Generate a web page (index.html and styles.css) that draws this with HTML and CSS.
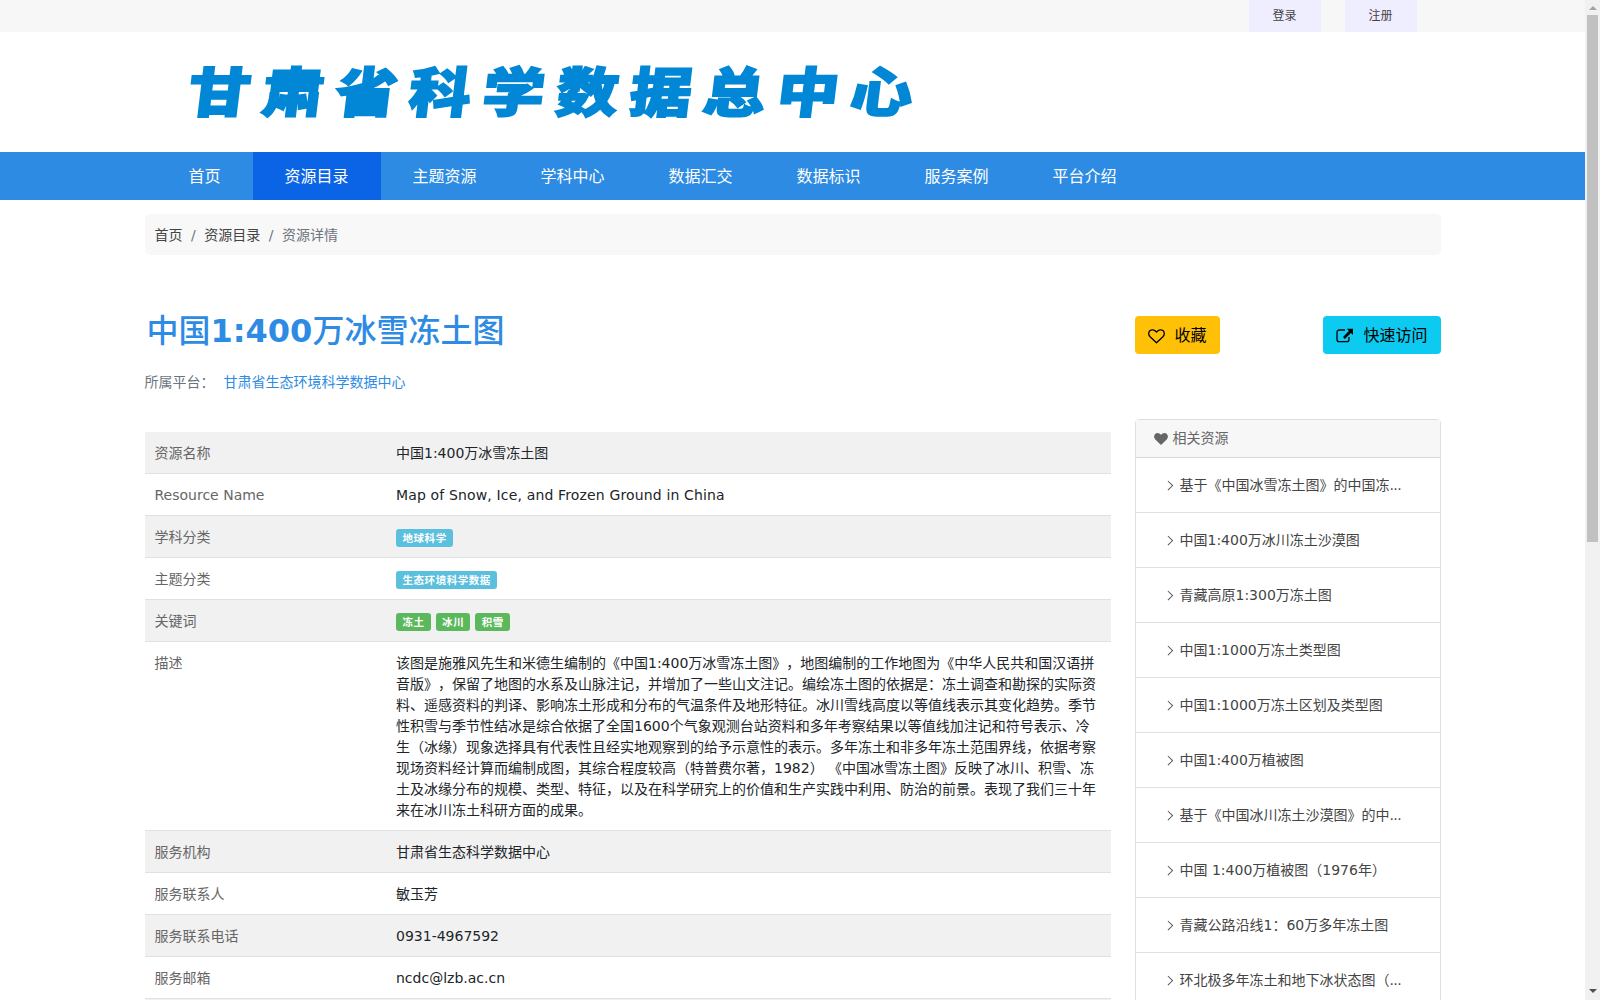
FILE: index.html
```html
<!DOCTYPE html>
<html lang="zh-CN">
<head>
    <meta charset="UTF-8">
    <meta name="viewport" content="width=device-width, initial-scale=1.0">
    <title>中国1:400万冰雪冻土图</title>
    <link rel="stylesheet" href="styles.css">
</head>
<body>
    <div class="page">
        <div class="topbar">
            <div class="container topbar-links">
                <a href="#">登录</a>
                <a href="#">注册</a>
            </div>
        </div>

        <header class="container header">
            <div class="logo">甘肃省科学数据总中心</div>
        </header>

        <nav class="navbar">
            <div class="container nav-list">
                <a href="#">首页</a>
                <a href="#" class="active">资源目录</a>
                <a href="#">主题资源</a>
                <a href="#">学科中心</a>
                <a href="#">数据汇交</a>
                <a href="#">数据标识</a>
                <a href="#">服务案例</a>
                <a href="#">平台介绍</a>
            </div>
        </nav>

        <div class="container">
            <div class="breadcrumb">
                <a href="#">首页</a><span class="sep">/</span><a href="#">资源目录</a><span class="sep">/</span><span>资源详情</span>
            </div>
        </div>

        <div class="container main">
            <div class="content">
                <h1 class="title">中国<b>1:400</b>万冰雪冻土图</h1>
                <p class="platform">所属平台：<a href="#">甘肃省生态环境科学数据中心</a></p>

                <table class="detail">
                    <tr><th>资源名称</th><td>中国1:400万冰雪冻土图</td></tr>
                    <tr><th>Resource Name</th><td class="en">Map of Snow, Ice, and Frozen Ground in China</td></tr>
                    <tr><th>学科分类</th><td><div class="labels"><span class="label info">地球科学</span></div></td></tr>
                    <tr><th>主题分类</th><td><div class="labels"><span class="label info">生态环境科学数据</span></div></td></tr>
                    <tr><th>关键词</th><td><div class="labels"><span class="label success">冻土</span><span class="label success">冰川</span><span class="label success">积雪</span></div></td></tr>
                    <tr><th>描述</th><td>该图是施雅风先生和米德生编制的《中国1:400万冰雪冻土图》，地图编制的工作地图为《中华人民共和国汉语拼<br>音版》，保留了地图的水系及山脉注记，并增加了一些山文注记。编绘冻土图的依据是：冻土调查和勘探的实际资<br>料、遥感资料的判译、影响冻土形成和分布的气温条件及地形特征。冰川雪线高度以等值线表示其变化趋势。季节<br>性积雪与季节性结冰是综合依据了全国1600个气象观测台站资料和多年考察结果以等值线加注记和符号表示、冷<br>生（冰缘）现象选择具有代表性且经实地观察到的给予示意性的表示。多年冻土和非多年冻土范围界线，依据考察<br>现场资料经计算而编制成图，其综合程度较高（特普费尔著，1982） 《中国冰雪冻土图》反映了冰川、积雪、冻<br>土及冰缘分布的规模、类型、特征，以及在科学研究上的价值和生产实践中利用、防治的前景。表现了我们三十年<br>来在冰川冻土科研方面的成果。</td></tr>
                    <tr><th>服务机构</th><td>甘肃省生态科学数据中心</td></tr>
                    <tr><th>服务联系人</th><td>敏玉芳</td></tr>
                    <tr><th>服务联系电话</th><td>0931-4967592</td></tr>
                    <tr><th>服务邮箱</th><td>ncdc@lzb.ac.cn</td></tr>
                    <tr><th></th><td></td></tr>
                </table>
            </div>

            <div class="sidebar">
                <div class="actions">
                    <button class="btn btn-warning">
                        <svg width="17" height="16" viewBox="0 0 17 16"><path d="M8.5 14.8 2.1 8.8C.3 6.900.3 4.200 1.800 2.800 3.600 1.200 6.400 1.400 8.500 4.100 10.600 1.400 13.400 1.200 15.200 2.800 16.700 4.200 16.700 6.900 14.900 8.800Z" fill="none" stroke="#000" stroke-width="1.300" stroke-linejoin="round"/></svg>
                        收藏
                    </button>
                    <button class="btn btn-info">
                        <svg width="17" height="16" viewBox="0 0 17 16"><path d="M9 2H3.200A2.200 2.200 0 0 0 1 4.200v7.200A2.200 2.200 0 0 0 3.200 13.600h7.600A2.200 2.200 0 0 0 13 11.400V9" fill="none" stroke="#000" stroke-width="1.300"/><path d="M10.800.8H17V7L15 5 8.800 10.900 7 9.100 12.900 2.900Z"/></svg>
                        快速访问
                    </button>
                </div>

                <div class="card">
                    <div class="card-header">
                        <svg width="14" height="14" viewBox="0 0 14 14"><path d="M7 13 1.300 7.500C-.4 5.600-.2 3.200 1.200 1.900 3 .4 5.400 1 7 3 8.600 1 11 .4 12.800 1.900 14.200 3.200 14.400 5.600 12.700 7.500Z" fill="#666"/></svg>
                        相关资源
                    </div>
                    <ul class="related">
                        <li>基于《中国冰雪冻土图》的中国冻<span class="dots">...</span></li>
                        <li>中国1:400万冰川冻土沙漠图</li>
                        <li>青藏高原1:300万冻土图</li>
                        <li>中国1:1000万冻土类型图</li>
                        <li>中国1:1000万冻土区划及类型图</li>
                        <li>中国1:400万植被图</li>
                        <li>基于《中国冰川冻土沙漠图》的中<span class="dots">...</span></li>
                        <li>中国 1:400万植被图（1976年）</li>
                        <li>青藏公路沿线1：60万多年冻土图</li>
                        <li>环北极多年冻土和地下冰状态图（<span class="dots">...</span></li>
                    </ul>
                </div>
            </div>
        </div>
    </div>

    <div class="scrollbar">
        <span class="arrow up"></span>
        <span class="thumb"></span>
        <span class="arrow down"></span>
    </div>
</body>
</html>
```

FILE: styles.css
```css
* {
    box-sizing: border-box;
}
body {
    display: flex;
    height: 1000px;
    margin: 0;
    overflow: hidden;
    background: #fff;
    color: #212529;
    font-family: "DejaVu Sans", "Noto Sans CJK SC", sans-serif;
    font-size: 14px;
    line-height: 21px;
    text-spacing-trim: space-all;
}
a {
    color: #444;
    text-decoration: none;
}
.page {
    flex: 1;
    overflow: hidden;
}
.container {
    width: 1320px;
    margin: 0 auto;
    padding: 0 12px;
}
.topbar {
    height: 32px;
    background: #f7f7f7;
}
.topbar-links {
    display: flex;
    justify-content: flex-end;
    gap: 24px;
    padding-right: 36px;
}
.topbar-links a {
    width: 72px;
    background: #eef;
    font-size: 12px;
    line-height: 32px;
    text-align: center;
}
.header {
    height: 120px;
    padding: 15px 56px;
}
.logo {
    color: #0187d5;
    font-family: "Noto Sans CJK SC", sans-serif;
    font-size: 62px;
    font-weight: 900;
    line-height: 84px;
    letter-spacing: 11.6px;
    white-space: nowrap;
    transform: scaleY(0.86) skewX(-6deg);
    -webkit-text-stroke: 2px #0187d5;
}
.navbar {
    height: 48px;
    background: #2d8be3;
}
.nav-list {
    display: flex;
    padding: 0 24px;
}
.nav-list a {
    height: 48px;
    padding: 0 32px;
    color: #fff;
    font-size: 16px;
    line-height: 49px;
}
.nav-list .active {
    background: #0b63e5;
}
.breadcrumb {
    height: 41px;
    margin-top: 14px;
    padding: 11px 10px 9px;
    border-radius: 5px;
    background: #f8f8f8;
    color: #6c757d;
}
.sep {
    padding: 0 8.5px;
}
.main {
    display: flex;
    gap: 24px;
}
.content {
    width: 966px;
    padding-top: 57px;
}
.title {
    margin: 0;
    padding-left: 2px;
    color: #2d8be3;
    font-size: 32px;
    font-weight: 500;
    line-height: 38px;
}
.title b {
    font-weight: bold;
}
.platform {
    margin: 22px 0 39px;
    color: #6c757d;
}
.platform a {
    margin-left: 9px;
    color: #2d8be3;
}
.detail {
    width: 100%;
    border-collapse: separate;
    border-spacing: 0;
    table-layout: fixed;
}
.detail th,
.detail td {
    height: 42px;
    padding: 11px 10px 9px;
    border-bottom: 1px solid #dee2e6;
    text-align: left;
    vertical-align: top;
    white-space: nowrap;
}
.detail th {
    width: 25%;
    color: #666;
    font-weight: normal;
}
.detail .en {
    letter-spacing: 0.15px;
}
.detail tr:nth-child(odd) {
    background: #f1f1f1;
}
.labels {
    display: flex;
    gap: 5px;
    padding-top: 2px;
}
.label {
    padding: 0 6px 0 6.5px;
    border-radius: 3px;
    color: #fff;
    font-size: 10.5px;
    font-weight: bold;
    letter-spacing: 0.55px;
    line-height: 18px;
}
.label.info {
    background: #5bc0de;
}
.label.success {
    background: #5cb85c;
}
.sidebar {
    width: 306px;
    padding-top: 61px;
}
.actions {
    display: flex;
    justify-content: space-between;
    margin-bottom: 65px;
}
.btn {
    display: flex;
    align-items: center;
    gap: 10px;
    height: 38px;
    padding: 1px 13px 0;
    border: none;
    border-radius: 4px;
    font-family: inherit;
    font-size: 16px;
    line-height: 24px;
}
.btn-warning {
    background: #ffc107;
}
.btn-info {
    background: #0dcaf0;
}
.card {
    border: 1px solid #dfdfdf;
    border-radius: 4px;
}
.card-header {
    display: flex;
    align-items: center;
    gap: 5px;
    height: 38px;
    padding: 0 18px;
    border-bottom: 1px solid #d8d8d8;
    background: #f7f7f7;
    color: #666;
}
.related {
    margin: 0;
    padding: 0;
    list-style: none;
}
.related li {
    display: flex;
    align-items: center;
    height: 55px;
    padding-left: 30px;
    border-bottom: 1px solid #dfdfdf;
    color: #444;
    white-space: nowrap;
}
.related li::before {
    content: "";
    width: 5.5px;
    height: 5.5px;
    margin-right: 7.5px;
    border: solid #555;
    border-width: 1.5px 1.5px 0 0;
    transform: translateX(-1px) rotate(45deg);
}
.dots {
    letter-spacing: -0.6px;
}
.scrollbar {
    display: flex;
    flex-direction: column;
    align-items: center;
    width: 15px;
    padding: 6px 0 7px;
    background: #f1f1f1;
}
.thumb {
    width: 11px;
    height: 527px;
    margin: 5px 0 auto;
    background: #c1c1c1;
}
.arrow {
    border: solid transparent;
    border-width: 0 4px;
}
.arrow.up {
    border-bottom: 4px solid #a3a3a3;
}
.arrow.down {
    border-top: 4px solid #505050;
}
```
